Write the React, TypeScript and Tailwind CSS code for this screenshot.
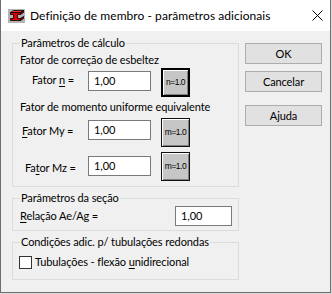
import React from "react";

const FONT = "font-['Lato',sans-serif]";

function BeamIcon() {
	return (
		<svg width="17" height="14" viewBox="0 0 17 14" className="shrink-0">
			<rect x="0" y="0" width="17" height="14" fill="#b4b4b4" />
			<path d="M2.5,3.5 L5.5,1.5 H15.5 L12.5,3.5 Z" fill="#ff3030" stroke="#000" strokeWidth="0.8" />
			<path d="M12.5,3.5 L15.5,1.5 V3.5 L12.5,5.5 Z" fill="#900" stroke="#000" strokeWidth="0.8" />
			<path d="M12.5,9.5 L15.5,7.5 V9.5 L12.5,11.5 Z" fill="#900" stroke="#000" strokeWidth="0.8" />
			<path
				d="M2.5,3.5 H12.5 V5.5 H9.5 V9.5 H12.5 V11.5 H2.5 V9.5 H5.5 V5.5 H2.5 Z"
				fill="#e00000"
				stroke="#000"
				strokeWidth="0.8"
			/>
		</svg>
	);
}

function CloseIcon() {
	return (
		<svg width="11" height="11" viewBox="0 0 11 11" className="shrink-0">
			<path d="M0.5,0.5 L10.5,10.5 M10.5,0.5 L0.5,10.5" stroke="#000" strokeWidth="1" />
		</svg>
	);
}

function Field({ value, className = "" }: { value: string; className?: string }) {
	return (
		<div
			className={`h-[20px] bg-white border border-[#7a7a7a] flex items-center pl-[5px] leading-[16px] text-black ${className}`}
		>
			{value}
		</div>
	);
}

function PresetButton({ label, thick = false }: { label: string; thick?: boolean }) {
	return (
		<div
			className={`w-[29px] h-[29px] bg-[#c6c6c6] flex items-center justify-center ${
				thick ? "border-2 border-black" : "border-[1.5px] border-[#111]"
			} shadow-[inset_1px_1px_0_#ffffff,inset_-1px_-1px_0_#808080]`}
		>
			<span className="text-[8.5px] leading-none tracking-[-0.5px] text-black font-['Liberation_Sans',sans-serif]">
				{label}
			</span>
		</div>
	);
}

function DialogButton({ label }: { label: string }) {
	return (
		<div className="w-[77px] h-[21px] bg-[#e1e1e1] border border-[#adadad] flex items-center justify-center text-black">
			{label}
		</div>
	);
}

export default function App() {
	return (
		<div
			className={`w-[332px] h-[294px] bg-[#dcdcdc] ${FONT} text-[11px] tracking-[-0.1px] leading-[16px] text-black whitespace-nowrap`}
		>
			<div className="w-[331px] h-[293px] flex flex-col border-l border-r border-b border-[#6e6e6e]">
				{/* title bar */}
				<div className="h-[31px] bg-white flex items-center pl-[7px] pr-[7px]">
					<BeamIcon />
					<span className="ml-[5px] text-[12px] tracking-[0.05px]">
						Definição de membro - parâmetros adicionais
					</span>
					<div className="flex-1" />
					<CloseIcon />
				</div>

				{/* body */}
				<div className="flex-1 bg-[#f0f0f0] flex pl-[11px]">
					<div className="w-[227px] flex flex-col">
						<fieldset className="mt-[4px] border border-[#dcdcdc] pb-[5px]">
							<legend className="ml-[7px] px-[1px] leading-[16px]">Parâmetros de cálculo</legend>
							<div className="pl-[7px] pt-[1px]">Fator de correção de esbeltez</div>
							<div className="flex items-start h-[29px]">
								<div className="w-[75px] pl-[19px] mt-[4px]">
									Fator <u className="underline-offset-2">n</u> =
								</div>
								<Field value="1,00" className="w-[63px] mt-[3px]" />
								<div className="ml-[10px]">
									<PresetButton label="n=1.0" thick />
								</div>
							</div>
							<div className="pl-[7px] mt-[2px]">Fator de momento uniforme equivalente</div>
							<div className="flex items-start h-[29px] mt-[3px]">
								<div className="w-[75px] pl-[9px] mt-[5px]">
									<u className="underline-offset-2">F</u>ator My =
								</div>
								<Field value="1,00" className="w-[63px] mt-[2px]" />
								<div className="ml-[10px]">
									<PresetButton label="m=1.0" />
								</div>
							</div>
							<div className="flex items-start h-[29px] mt-[5px]">
								<div className="w-[75px] pl-[12px] mt-[8px]">
									Fa<u className="underline-offset-2">t</u>or Mz =
								</div>
								<Field value="1,00" className="w-[63px] mt-[4px]" />
								<div className="ml-[10px]">
									<PresetButton label="m=1.0" />
								</div>
							</div>
						</fieldset>

						<fieldset className="mt-[3px] border border-[#dcdcdc] pb-[4px]">
							<legend className="ml-[7px] px-[1px] leading-[16px]">Parâmetros da seção</legend>
							<div className="flex items-start justify-between pr-[6px]">
								<div className="pl-[7px] mt-[2px]">
									<u className="underline-offset-2">R</u>elação Ae/Ag =
								</div>
								<Field value="1,00" className="w-[57px]" />
							</div>
						</fieldset>

						<fieldset className="mt-[3px] border border-[#dcdcdc] pb-[9px]">
							<legend className="ml-[7px] px-[1px] leading-[16px]">
								Condições adic. p/ tubulações redondas
							</legend>
							<div className="flex items-center h-[16px] mt-[4px] pl-[6px]">
								<div className="w-[13px] h-[13px] bg-white border border-[#333333]" />
								<span className="ml-[3px]">
									Tubulações - flexão <u className="underline-offset-2">u</u>nidirecional
								</span>
							</div>
						</fieldset>
					</div>

					<div className="ml-[6px] flex flex-col pt-[12px]">
						<DialogButton label="OK" />
						<div className="mt-[7px]">
							<DialogButton label="Cancelar" />
						</div>
						<div className="mt-[13px]">
							<DialogButton label="Ajuda" />
						</div>
					</div>
				</div>
			</div>
		</div>
	);
}
